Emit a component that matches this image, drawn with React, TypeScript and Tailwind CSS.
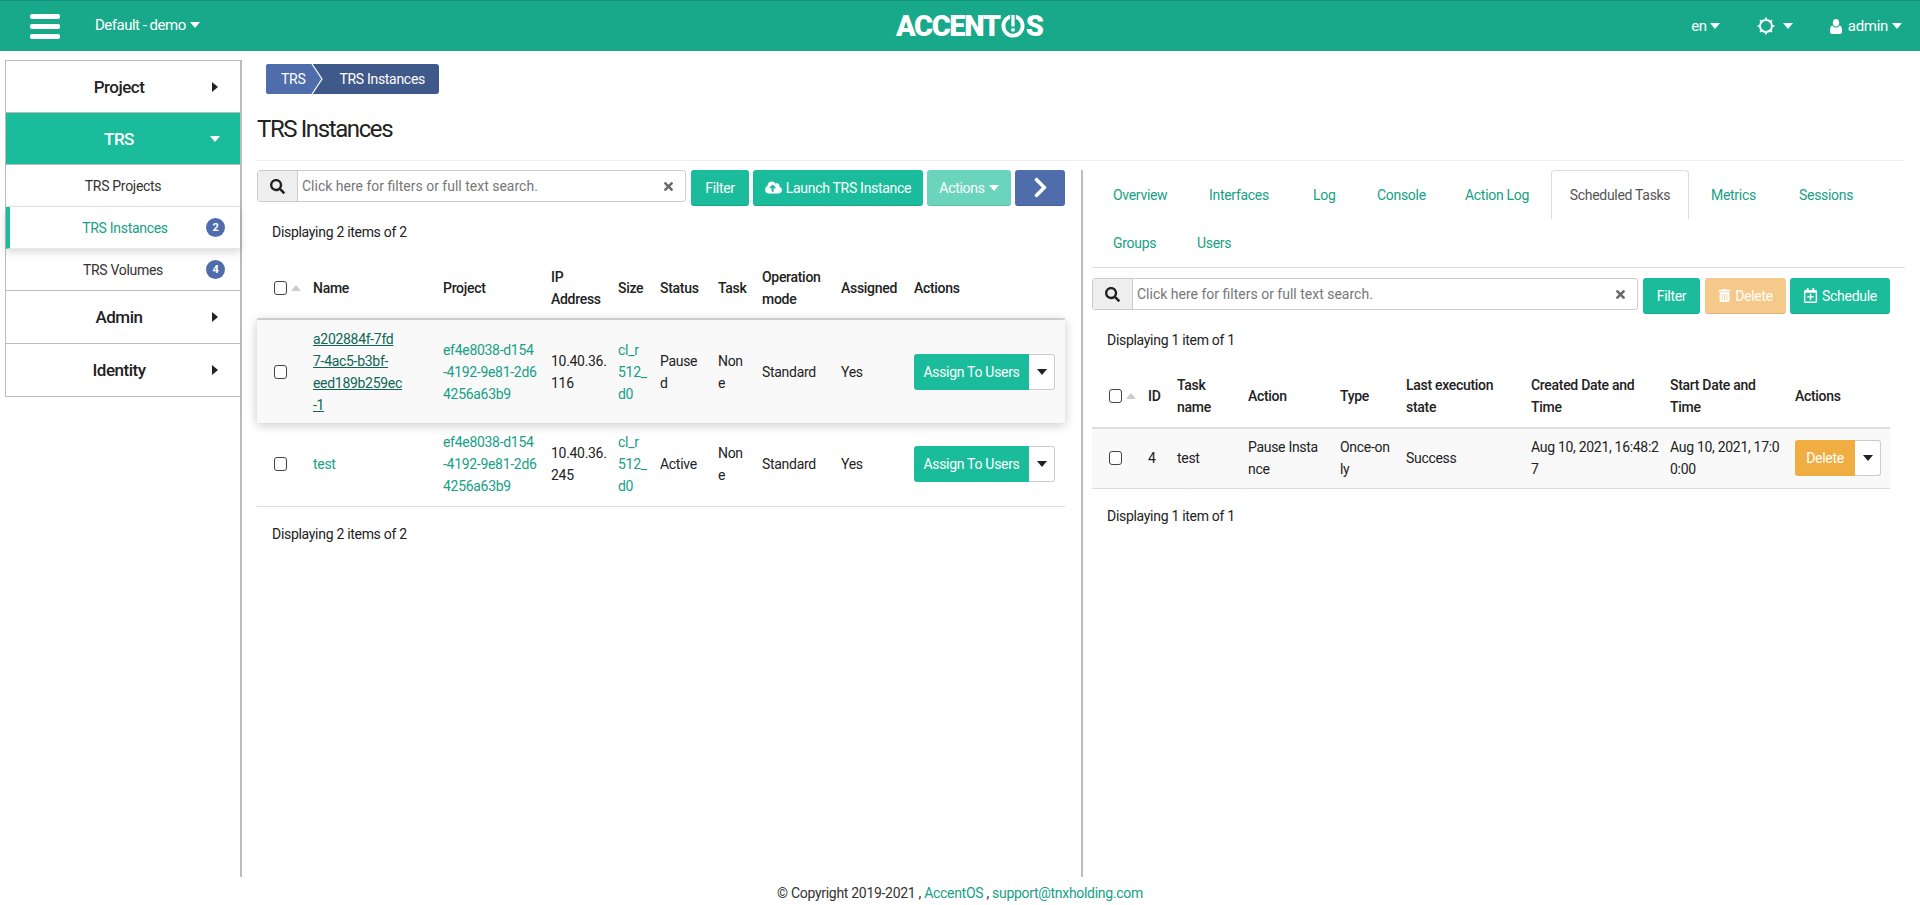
import React from 'react';
import {
  FaChevronRight,
  FaCloudUploadAlt,
  FaRegCalendarPlus,
  FaSearch,
  FaTimes,
  FaTrashAlt,
} from 'react-icons/fa';

const linkCls = 'text-[#16a085]';

const CaretDown = ({ className = '' }: { className?: string }) => (
  <span className={`inline-block h-0 w-0 shrink-0 border-x-[5px] border-t-[6px] border-x-transparent border-t-current ${className}`} />
);

const CaretRight = ({ className = '' }: { className?: string }) => (
  <span className={`inline-block h-0 w-0 shrink-0 border-y-[5px] border-l-[6px] border-y-transparent border-l-current ${className}`} />
);

const SunIcon = () => (
  <svg width="18" height="18" viewBox="0 0 18 18" fill="none">
    <circle cx="9" cy="9" r="6" stroke="white" strokeWidth="2" />
    <path d="M9 0.5v2M9 15.5v2M0.5 9h2M15.5 9h2M3 3l1.4 1.4M13.6 13.6L15 15M3 15l1.4-1.4M13.6 4.4L15 3" stroke="white" strokeWidth="1.6" />
  </svg>
);

const UserIcon = () => (
  <svg width="12" height="15" viewBox="0 0 12 15" fill="white">
    <ellipse cx="6" cy="3.8" rx="3.2" ry="3.8" />
    <path d="M2.4 6.6C3.2 8 4.5 8.6 6 8.6s2.8-.6 3.6-2c1.6.4 2.4 1.900 2.400 4.600v1.800c0 1.200-.8 2-2 2H2c-1.200 0-2-.8-2-2v-1.800c0-2.700.8-4.200 2.400-4.600z" />
  </svg>
);

const PowerO = () => (
  <svg width="24" height="24" viewBox="0 0 25 25" className="mx-[1px] shrink-0">
    <circle cx="12.5" cy="12.5" r="10" fill="none" stroke="white" strokeWidth="4" />
    <rect x="9.5" y="0" width="6" height="14" fill="#18a88a" />
    <rect x="10.800" y="1" width="3.400" height="12" fill="white" />
    <circle cx="12.5" cy="16.5" r="2" fill="white" />
  </svg>
);

const SideItem = ({ label, active, open, tall }: { label: string; active?: boolean; open?: boolean; tall?: boolean }) => (
  <div className={`flex items-center border-b border-[#bbb] text-[17px] font-medium tracking-[-0.5px] ${tall ? 'h-[53px]' : 'h-[52px]'} ${active ? 'bg-[#1abc9c] text-white' : 'text-[#222]'}`}>
    <span className="flex-1 pl-[23px] text-center">{label}</span>
    <span className="mr-[19px] flex w-[12px] justify-center">{open ? <CaretDown /> : <CaretRight />}</span>
  </div>
);

const SubItem = ({ label, badge, current, last }: { label: string; badge?: number; current?: boolean; last?: boolean }) => (
  <div className={`relative flex h-[42px] items-center justify-center border-b text-[14px] ${last ? 'border-[#bbb]' : 'border-[#e8e8e8]'} ${current ? 'z-10 border-l-[4px] border-l-[#1abc9c] text-[#16a085] shadow-[0_3px_8px_rgba(0,0,0,0.16)]' : 'text-[#333]'}`}>
    {label}
    {badge !== undefined && (
      <span className="absolute right-[15px] flex h-[19px] w-[19px] items-center justify-center rounded-full bg-[#4f6daa] text-[11px] font-bold text-white">{badge}</span>
    )}
  </div>
);

const Btn = ({ color, children, className = '' }: { color: string; children: React.ReactNode; className?: string }) => (
  <button className={`flex h-[36px] items-center justify-center gap-[4px] rounded-[3px] border-b border-black/10 text-[14px] text-white ${color} ${className}`}>{children}</button>
);

const SearchBox = ({ className }: { className: string }) => (
  <div className={`flex h-[32px] items-center rounded-[3px] border border-[#ccc] ${className}`}>
    <span className="flex h-full w-[40px] shrink-0 items-center justify-center border-r border-[#ccc] bg-[#eee] text-[#222]">
      <FaSearch className="text-[15px]" />
    </span>
    <input className="h-full min-w-0 flex-1 pl-[4px] text-[14px] tracking-normal outline-none placeholder:text-[#777]" placeholder="Click here for filters or full text search." />
    <FaTimes className="mr-[10px] text-[13px] text-[#666]" />
  </div>
);

const Check = () => <input type="checkbox" className="block h-[14px] w-[13px] appearance-none rounded-[3px] border-[1.5px] border-[#444] bg-white" />;

const SortCheck = () => (
  <div className="flex items-center pl-[17px]">
    <Check />
    <span className="ml-[4px] h-0 w-0 border-x-[5px] border-b-[6px] border-x-transparent border-b-[#ccc]" />
  </div>
);

const SplitBtn = ({ label, color, width }: { label: string; color: string; width: string }) => (
  <div className="flex h-[36px]">
    <button className={`rounded-l-[3px] text-[14px] text-white ${color} ${width}`}>{label}</button>
    <span className="flex w-[26px] items-center justify-center rounded-r-[3px] border border-l-0 border-[#ccc] bg-white text-[#222]">
      <CaretDown />
    </span>
  </div>
);

const instances = [
  {
    name: ['a202884f-7fd', '7-4ac5-b3bf-', 'eed189b259ec', '-1'],
    ip: ['10.40.36.', '116'],
    status: ['Pause', 'd'],
    selected: true,
  },
  { name: ['test'], ip: ['10.40.36.', '245'], status: ['Active'], selected: false },
];

const lines = (parts: string[]) =>
  parts.map((p, i) => (
    <React.Fragment key={p}>
      {i > 0 && <br />}
      {p}
    </React.Fragment>
  ));

const leftCols = [48, 130, 108, 67, 42, 58, 44, 79, 73, 159];
const rightCols = [48, 29, 71, 92, 66, 125, 139, 125, 103];

const App = () => {
  return (
    <div className="flex h-[905px] flex-col overflow-hidden bg-white font-['Roboto',sans-serif] text-[14px] leading-[22px] tracking-[-0.3px] text-[#222]">
      <header className="flex h-[51px] shrink-0 items-center border-t border-[#14967c] bg-[#18a88a] text-white">
        <div className="ml-[30px] flex h-[25px] w-[30px] flex-col justify-between">
          <span className="h-[5px] rounded-[2px] bg-white" />
          <span className="h-[5px] rounded-[2px] bg-white" />
          <span className="h-[5px] rounded-[2px] bg-white" />
        </div>
        <div className="ml-[35px] flex -translate-y-px items-center text-[15px] tracking-[-0.5px]">
          Default - demo <CaretDown className="ml-[4px]" />
        </div>
        <div className="ml-[695px] flex w-[149px] items-center justify-center text-[29px] font-black tracking-[-1.4px]">
          ACCENT<PowerO />S
        </div>
        <div className="ml-auto flex items-center text-[15px]">
          en <CaretDown className="ml-[3px]" />
          <span className="ml-[37px]"><SunIcon /></span>
          <CaretDown className="ml-[8px]" />
          <span className="ml-[37px]"><UserIcon /></span>
          <span className="ml-[6px]">admin</span>
          <CaretDown className="ml-[4px] mr-[18px]" />
        </div>
      </header>

      <div className="flex min-h-0 flex-1">
        <aside className="ml-[5px] mt-[9px] w-[237px] shrink-0 border-r-2 border-[#bbb]">
          <div className="border-l border-t border-[#bbb]">
            <SideItem label="Project" />
            <SideItem label="TRS" active open />
            <SubItem label="TRS Projects" />
            <SubItem label="TRS Instances" badge={2} current />
            <SubItem label="TRS Volumes" badge={4} last />
            <SideItem label="Admin" tall />
            <SideItem label="Identity" tall />
          </div>
        </aside>

        <main className="flex min-w-0 flex-1 flex-col pl-[15px] pr-[15px]">
          <nav className="ml-[9px] mt-[13px] flex h-[30px] w-[173px] shrink-0 overflow-hidden rounded-[3px] bg-[#3f5a8a] text-[14px] text-white">
            <span className="flex items-center bg-[#4f6daa] pl-[15px] pr-[6px]">TRS</span>
            <svg width="12" height="30" viewBox="0 0 12 30" className="shrink-0">
              <path d="M0 0h1l10 15L1 30H0z" fill="#4f6daa" />
              <path d="M1 0l10 15L1 30" fill="none" stroke="white" strokeWidth="1.200" />
            </svg>
            <span className="flex items-center pl-[16px]">TRS Instances</span>
          </nav>
          <h1 className="flex h-[67px] shrink-0 items-center border-b border-[#eee] pt-[4px] text-[24px] font-normal tracking-[-1.4px]">TRS Instances</h1>

          <div className="mt-[9px] flex min-h-0 flex-1">
            <section className="mr-[16px] w-[808px] shrink-0">
              <div className="flex">
                <SearchBox className="w-[429px]" />
                <Btn color="bg-[#1abc9c]" className="ml-[5px] w-[58px]">Filter</Btn>
                <Btn color="bg-[#1abc9c]" className="ml-[4px] w-[170px]"><FaCloudUploadAlt className="text-[17px]" /> Launch TRS Instance</Btn>
                <Btn color="bg-[#6bd4bc]" className="ml-[4px] w-[84px]">Actions <CaretDown /></Btn>
                <Btn color="bg-[#4f6daa]" className="ml-[4px] w-[50px]"><FaChevronRight className="text-[23px]" /></Btn>
              </div>
              <p className="mt-[15px] h-[22px] pl-[15px]">Displaying 2 items of 2</p>
              <table className="mt-[14px] w-[808px] table-fixed border-collapse">
                <colgroup>
                  {leftCols.map((w, i) => <col key={i} style={{ width: w }} />)}
                </colgroup>
                <thead className="font-medium">
                  <tr className="h-[62px] border-b-2 border-[#ddd] text-left [&>th]:pl-[8px] [&>th]:font-medium">
                    <th className="!pl-0"><SortCheck /></th>
                    <th>Name</th>
                    <th>Project</th>
                    <th>IP<br />Address</th>
                    <th>Size</th>
                    <th>Status</th>
                    <th>Task</th>
                    <th>Operation<br />mode</th>
                    <th>Assigned</th>
                    <th>Actions</th>
                  </tr>
                </thead>
                <tbody>
                  {instances.map((r) => (
                    <tr key={r.name[0]} className={`[&>td]:pl-[8px] [&>td]:whitespace-nowrap ${r.selected ? 'relative h-[104px] bg-[#f9f9f9] shadow-[0_2px_10px_rgba(0,0,0,0.22)]' : 'h-[83px] border-b border-[#ddd]'}`}>
                      <td className="!pl-[17px]"><Check /></td>
                      <td className={r.selected ? 'text-[#0e6655] underline' : linkCls}>{lines(r.name)}</td>
                      <td className={linkCls}>ef4e8038-d154<br />-4192-9e81-2d6<br />4256a63b9</td>
                      <td>{lines(r.ip)}</td>
                      <td className={linkCls}>cl_r<br />512_<br />d0</td>
                      <td>{lines(r.status)}</td>
                      <td>Non<br />e</td>
                      <td>Standard</td>
                      <td>Yes</td>
                      <td><SplitBtn label="Assign To Users" color="bg-[#1abc9c]" width="w-[115px]" /></td>
                    </tr>
                  ))}
                </tbody>
              </table>
              <p className="mt-[16px] pl-[15px]">Displaying 2 items of 2</p>
            </section>

            <section className="min-w-0 flex-1 border-l-2 border-[#bbb] pl-[9px]">
              <div className="h-[98px] border-b border-[#ddd] pl-[21px] text-[#16a085]">
                <div className="flex h-[49px] items-center">
                  <span className="w-[96px]">Overview</span>
                  <span className="w-[104px]">Interfaces</span>
                  <span className="w-[64px]">Log</span>
                  <span className="w-[88px]">Console</span>
                  <span className="w-[86px]">Action Log</span>
                  <span className="flex h-[49px] w-[138px] items-center justify-center rounded-t-[4px] border border-b-0 border-[#ddd] text-[#555]">Scheduled Tasks</span>
                  <span className="ml-[22px] w-[88px]">Metrics</span>
                  <span>Sessions</span>
                </div>
                <div className="flex h-[48px] items-center">
                  <span className="w-[84px]">Groups</span>
                  <span>Users</span>
                </div>
              </div>
              <div className="mt-[10px] flex">
                <SearchBox className="w-[546px]" />
                <Btn color="bg-[#1abc9c]" className="ml-[5px] w-[57px]">Filter</Btn>
                <Btn color="bg-[#f5c98a]" className="ml-[5px] w-[81px]"><FaTrashAlt className="text-[13px]" /> Delete</Btn>
                <Btn color="bg-[#1abc9c]" className="ml-[4px] w-[100px]"><FaRegCalendarPlus className="text-[15px]" /> Schedule</Btn>
              </div>
              <p className="mt-[15px] h-[22px] pl-[15px]">Displaying 1 item of 1</p>
              <table className="mt-[13px] w-[798px] table-fixed border-collapse">
                <colgroup>
                  {rightCols.map((w, i) => <col key={i} style={{ width: w }} />)}
                </colgroup>
                <thead>
                  <tr className="h-[64px] border-b-2 border-[#ddd] text-left [&>th]:pl-[8px] [&>th]:font-medium">
                    <th className="!pl-0"><SortCheck /></th>
                    <th>ID</th>
                    <th>Task<br />name</th>
                    <th>Action</th>
                    <th>Type</th>
                    <th>Last execution<br />state</th>
                    <th>Created Date and<br />Time</th>
                    <th>Start Date and<br />Time</th>
                    <th>Actions</th>
                  </tr>
                </thead>
                <tbody>
                  <tr className="h-[60px] border-b border-[#ddd] bg-[#f9f9f9] [&>td]:pl-[8px] [&>td]:whitespace-nowrap">
                    <td className="!pl-[17px]"><Check /></td>
                    <td>4</td>
                    <td>test</td>
                    <td>Pause Insta<br />nce</td>
                    <td>Once-on<br />ly</td>
                    <td>Success</td>
                    <td>Aug 10, 2021, 16:48:2<br />7</td>
                    <td>Aug 10, 2021, 17:0<br />0:00</td>
                    <td><SplitBtn label="Delete" color="bg-[#f0ad42]" width="w-[60px]" /></td>
                  </tr>
                </tbody>
              </table>
              <p className="mt-[16px] pl-[15px]">Displaying 1 item of 1</p>
            </section>
          </div>
        </main>
      </div>

      <footer className="flex h-[28px] shrink-0 items-center justify-center pt-[4px] text-[14px] text-[#333]">
        © Copyright 2019-2021 ,&nbsp;<span className={linkCls}>AccentOS</span>&nbsp;,&nbsp;<span className={linkCls}>support@tnxholding.com</span>
      </footer>
    </div>
  );
};

export default App;
